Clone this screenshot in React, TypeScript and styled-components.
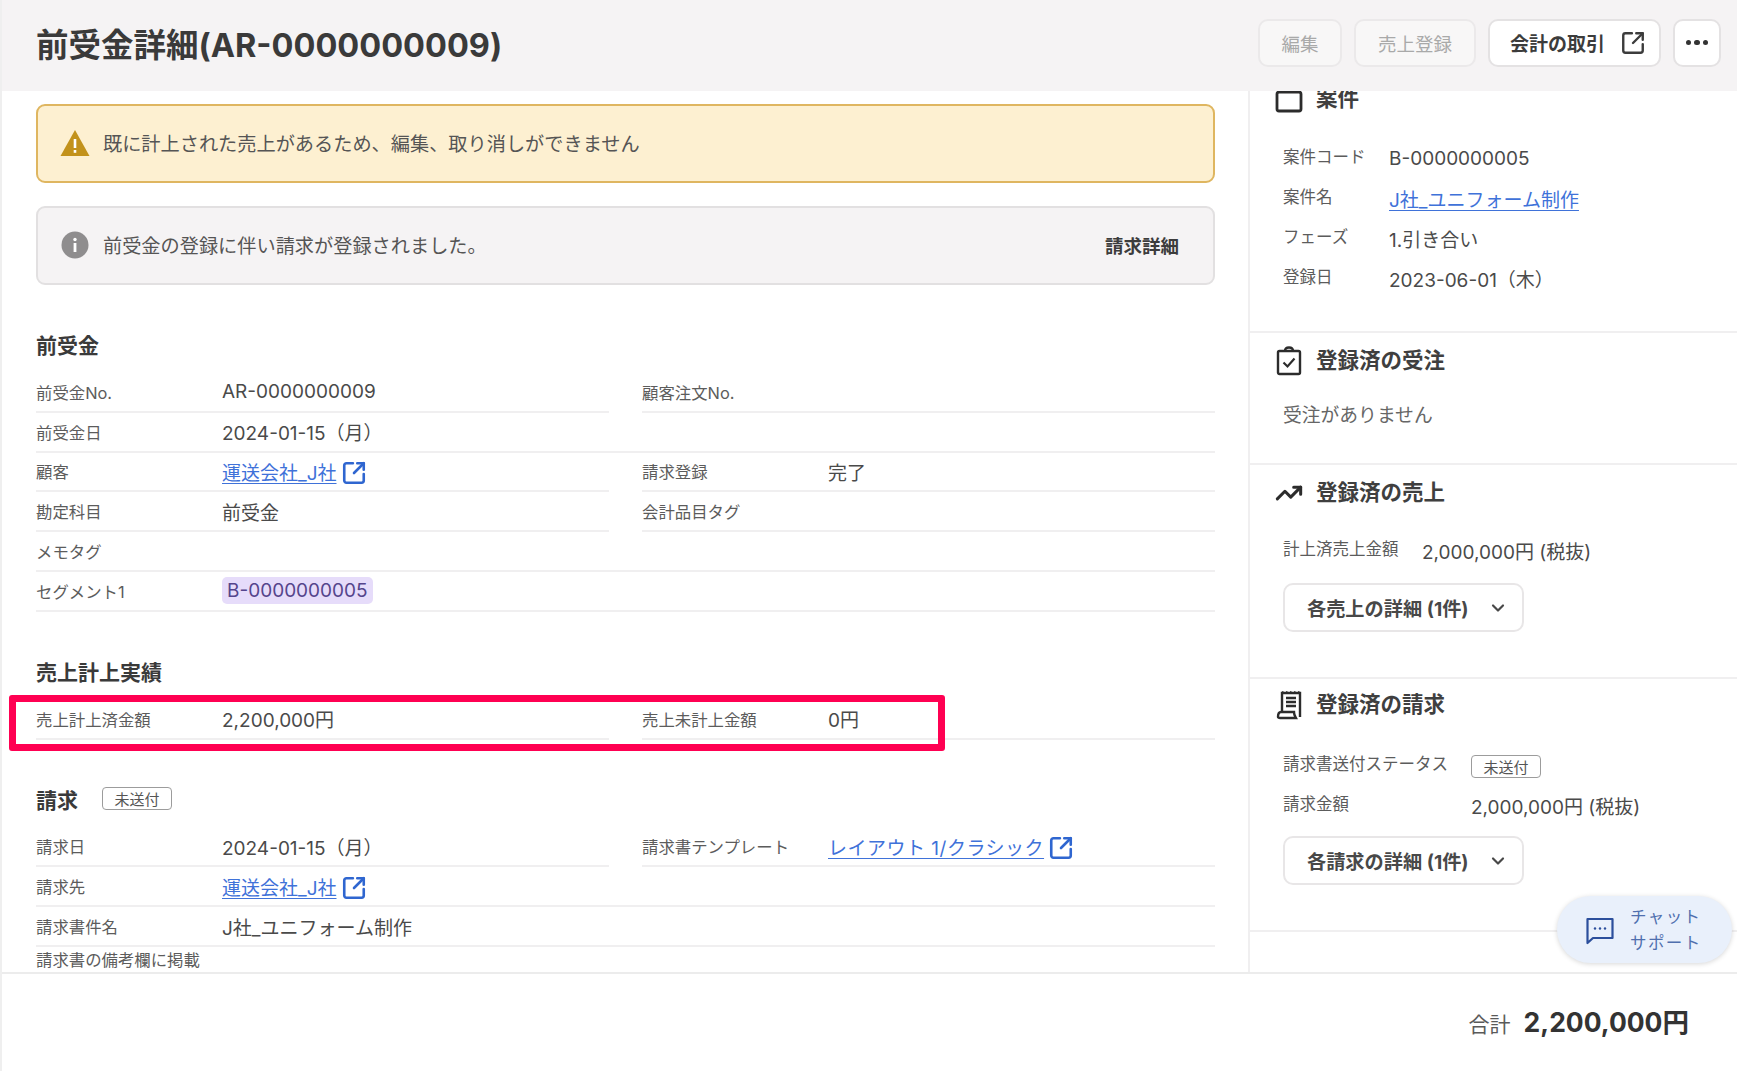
import React from 'react';
import styled, { createGlobalStyle } from 'styled-components';
import { ChevronDown, SquareArrowOutUpRight, TrendingUp } from 'lucide-react';

const GlobalStyle = createGlobalStyle`
  html, body {
    margin: 0;
    padding: 0;
    background: #fff;
    font-family: Inter, "Noto Sans CJK JP", sans-serif;
    color: #4a4a4a;
  }
  * { box-sizing: border-box; }
`;

const Page = styled.div`
  position: relative;
  width: 1737px;
  height: 1071px;
  overflow: hidden;
  display: flex;
  flex-direction: column;
  border-left: 2px solid #efefef;
`;

const Header = styled.header`
  height: 91px;
  flex: none;
  display: flex;
  align-items: center;
  justify-content: space-between;
  padding: 0 16px 6px 34px;
  background: #f5f3f4;
  position: relative;
  z-index: 2;
`;

const Title = styled.h1`
  margin: 0;
  font-size: 32.5px;
  font-weight: 700;
  color: #3a3a3a;
`;

const Toolbar = styled.div`
  display: flex;
  gap: 12px;
`;

const ToolButton = styled.button<{ $disabled?: boolean; $width: number; $inset?: number }>`
  width: ${p => p.$width}px;
  height: 48px;
  padding: 0 0 0 ${p => p.$inset || 0}px;
  display: flex;
  align-items: center;
  justify-content: center;
  gap: 15px;
  font: inherit;
  font-size: ${p => (p.$disabled ? 18.5 : 19)}px;
  font-weight: ${p => (p.$disabled ? 400 : 700)};
  color: ${p => (p.$disabled ? '#a9a9a9' : '#3c3c3c')};
  background: ${p => (p.$disabled ? '#f8f7f7' : '#fff')};
  border: 2px solid ${p => (p.$disabled ? '#ebe9ea' : '#e4e2e3')};
  border-radius: 10px;
`;

const MoreDots = styled.span`
  display: flex;
  gap: 3px;
  & > i {
    width: 5.5px;
    height: 5.5px;
    border-radius: 50%;
    background: #333;
  }
`;

const Body = styled.div`
  flex: 1;
  min-height: 0;
  display: flex;
`;

const Main = styled.main`
  position: relative;
  flex: 1;
  min-width: 0;
  padding: 13px 33px 0 34px;
  overflow: hidden;
`;

const Notice = styled.div<{ $warn?: boolean }>`
  height: 79px;
  margin-bottom: 23px;
  padding: 0 34px 2px 22px;
  display: flex;
  align-items: center;
  gap: 13px;
  font-size: 19.2px;
  color: #555;
  border-radius: 9px;
  background: ${p => (p.$warn ? '#fdf0d1' : '#f5f3f4')};
  border: 2px solid ${p => (p.$warn ? '#dfb660' : '#e2e0e1')};
`;

const NoticeText = styled.span`
  flex: 1;
`;

const NoticeAction = styled.span`
  font-weight: 700;
  font-size: 18.5px;
  color: #3c3c3c;
`;

const Block = styled.section`
  margin-top: 44px;
`;

const BlockTitle = styled.h2`
  margin: 0 0 14px;
  height: 30px;
  display: flex;
  align-items: center;
  gap: 24px;
  font-size: 21px;
  font-weight: 700;
  color: #3a3a3a;
`;

const FieldGrid = styled.div`
  display: grid;
  grid-template-columns: 1fr 1fr;
  column-gap: 33px;
  grid-auto-rows: 39.8px;
`;

const Field = styled.div<{ $wide?: boolean; $open?: boolean }>`
  grid-column: ${p => (p.$wide ? '1 / -1' : 'auto')};
  display: flex;
  align-items: ${p => (p.$open ? 'flex-start' : 'center')};
  border-bottom: 2px solid #f0eff0;
`;

const FieldLabel = styled.span`
  width: 186px;
  flex: none;
  font-size: 16.4px;
  color: #5c5c5c;
`;

const FieldValue = styled.span`
  display: inline-flex;
  align-items: center;
  gap: 4px;
  font-size: 19px;
  color: #4a4a4a;
`;

const TextLink = styled.a`
  color: #3f72d9;
  text-decoration: underline;
  text-underline-offset: 3px;
`;

const WideLink = styled(TextLink)`
  letter-spacing: 0.5px;
`;

const LinkIcon = styled(SquareArrowOutUpRight)`
  color: #2f66d0;
  position: relative;
  top: 2px;
`;

const SegmentTag = styled.span`
  padding: 0 5px;
  height: 27px;
  display: inline-flex;
  align-items: center;
  border-radius: 5px;
  background: #e6dcfa;
  color: #55458c;
`;

const StatusBadge = styled.span`
  display: inline-flex;
  align-items: center;
  justify-content: center;
  width: 70px;
  height: 23px;
  font-size: 15px;
  font-weight: 400;
  color: #555;
  background: #fff;
  border: 1.5px solid #9c9c9c;
  border-radius: 4px;
`;

const Highlight = styled.div`
  position: absolute;
  left: 7px;
  top: 604px;
  width: 936px;
  height: 56px;
  border: 7px solid #ff0052;
  border-radius: 3px;
`;

const Sidebar = styled.aside`
  width: 489px;
  flex: none;
  border-left: 2px solid #f0eff0;
  overflow: hidden;
`;

const SideSection = styled.section<{ $first?: boolean; $top: number; $bottom: number }>`
  margin-top: ${p => (p.$first ? '-18px' : '0')};
  padding: ${p => p.$top}px 0 ${p => p.$bottom}px 25px;
  border-bottom: 2px solid #f0eff0;
`;

const SideTitle = styled.h3<{ $gap: number }>`
  margin: 0 0 ${p => p.$gap}px;
  height: 30px;
  display: flex;
  align-items: center;
  gap: 13px;
  font-size: 21.5px;
  line-height: 1;
  font-weight: 700;
  color: #3f3f3f;
`;

const IconSlot = styled.span`
  width: 28px;
  height: 30px;
  flex: none;
  display: flex;
  align-items: center;
  justify-content: center;
  color: #2c2c2c;
`;

const SideRows = styled.div`
  padding-left: 8px;
`;

const SideRow = styled.div<{ $labelWidth: number }>`
  height: 40px;
  display: flex;
  align-items: center;
  & > span:first-child {
    width: ${p => p.$labelWidth}px;
    flex: none;
    font-size: 16.5px;
    color: #5c5c5c;
    position: relative;
    top: -3px;
  }
`;

const SideValue = styled.span`
  font-size: 19px;
  color: #4a4a4a;
  position: relative;
  top: -1px;
`;

const EmptyText = styled.p`
  margin: 0 0 0 8px;
  font-size: 18.8px;
  line-height: 24px;
  color: #666;
`;

const DetailButton = styled.button<{ $offset: number }>`
  width: 241px;
  height: 49px;
  margin-top: ${p => p.$offset}px;
  padding: 0 14px 0 22px;
  display: flex;
  align-items: center;
  justify-content: space-between;
  font: inherit;
  font-size: 19.2px;
  font-weight: 700;
  color: #484848;
  background: #fff;
  border: 2px solid #e8e6e7;
  border-radius: 10px;
`;

const Footer = styled.footer`
  height: 99px;
  flex: none;
  display: flex;
  align-items: center;
  justify-content: flex-end;
  gap: 13px;
  padding: 0 48px 4px 0;
  border-top: 2px solid #ececec;
  background: #fff;
  position: relative;
`;

const TotalLabel = styled.span`
  font-size: 21px;
  color: #5a5a5a;
  position: relative;
  top: 2px;
`;

const TotalValue = styled.span`
  font-size: 26.5px;
  font-weight: 700;
  color: #333;
`;

const ChatBubble = styled.div`
  position: absolute;
  top: 896px;
  left: 1555px;
  width: 175px;
  height: 67px;
  display: flex;
  align-items: center;
  gap: 15px;
  padding-left: 28px;
  border-radius: 34px;
  background: #e9f0fb;
  box-shadow: 0 1px 5px rgba(0, 0, 0, 0.16);
  z-index: 3;
  color: #2c4f9c;
`;

const ChatText = styled.span`
  font-size: 16.5px;
  line-height: 26px;
  letter-spacing: 1.4px;
  color: #4f6fae;
`;

const ExternalIcon = () => (
  <LinkIcon size={26} strokeWidth={2.6} absoluteStrokeWidth />
);

const WarningIcon = () => (
  <svg width="30" height="28" viewBox="0 0 30 28">
    <path d="M15 1 L29.5 27 H.5 Z" fill="#c2921b" />
    <rect x="13.7" y="10" width="2.6" height="9" fill="#fff" />
    <rect x="13.7" y="21" width="2.6" height="2.8" fill="#fff" />
  </svg>
);

const InfoIcon = () => (
  <svg width="30" height="28" viewBox="0 0 30 28">
    <circle cx="15" cy="14" r="13.5" fill="#8f8d8e" />
    <rect x="13.6" y="12" width="2.8" height="9" fill="#fff" />
    <circle cx="15" cy="8.5" r="1.7" fill="#fff" />
  </svg>
);

const CalendarIcon = () => (
  <svg width="28" height="30" viewBox="0 0 28 30" fill="none" stroke="currentColor" strokeWidth="2.8">
    <rect x="2" y="8" width="24" height="19" rx="2" />
    <path d="M8 3v5M20 3v5" />
  </svg>
);

const ClipboardIcon = () => (
  <svg width="26" height="30" viewBox="0 0 26 30" fill="none" stroke="currentColor" strokeWidth="2.4">
    <rect x="2" y="5" width="22" height="23" rx="1.5" />
    <path d="M9 5c0-2 1.5-3.5 4-3.5S17 3 17 5" />
    <path d="M7.5 16.5l4 4 7-8" strokeWidth="2.2" />
  </svg>
);

const ReceiptIcon = () => (
  <svg width="26" height="30" viewBox="0 0 26 30" fill="none" stroke="currentColor" strokeWidth="2.4">
    <path d="M6 22V3h18v24" />
    <path d="M6 2.5h1.5M10 2.5h1.5M14 2.5h1.5M18 2.5h1.5M22 2.5h1.5" />
    <path d="M10 8h10M10 12h10M10 16h10" />
    <path d="M2 27c0-3 1-5 3-5h13c0 3 1 4 2 6H4c-1 0-2-.4-2-1z" />
  </svg>
);

const ChatIcon = () => (
  <svg width="30" height="30" viewBox="0 0 30 30" fill="none" stroke="currentColor" strokeWidth="2.2">
    <path d="M2.5 4h25v19H8l-5.5 5z" strokeLinejoin="round" />
    <circle cx="10" cy="13.5" r="1.2" fill="currentColor" stroke="none" />
    <circle cx="15" cy="13.5" r="1.2" fill="currentColor" stroke="none" />
    <circle cx="20" cy="13.5" r="1.2" fill="currentColor" stroke="none" />
  </svg>
);

const App = () => {
  return <Page>
    <GlobalStyle />
    <Header>
      <Title>前受金詳細(AR-0000000009)</Title>
      <Toolbar>
        <ToolButton $disabled $width={84}>編集</ToolButton>
        <ToolButton $disabled $width={122}>売上登録</ToolButton>
        <ToolButton $width={173} $inset={7}>
          会計の取引
          <SquareArrowOutUpRight size={26} strokeWidth={2.4} absoluteStrokeWidth />
        </ToolButton>
        <ToolButton $width={48}>
          <MoreDots><i /><i /><i /></MoreDots>
        </ToolButton>
      </Toolbar>
    </Header>

    <Body>
      <Main>
        <Notice $warn>
          <WarningIcon />
          <NoticeText>既に計上された売上があるため、編集、取り消しができません</NoticeText>
        </Notice>
        <Notice>
          <InfoIcon />
          <NoticeText>前受金の登録に伴い請求が登録されました。</NoticeText>
          <NoticeAction>請求詳細</NoticeAction>
        </Notice>

        <Block>
          <BlockTitle>前受金</BlockTitle>
          <FieldGrid>
            <Field>
              <FieldLabel>前受金No.</FieldLabel>
              <FieldValue>AR-0000000009</FieldValue>
            </Field>
            <Field>
              <FieldLabel>顧客注文No.</FieldLabel>
            </Field>
            <Field $wide>
              <FieldLabel>前受金日</FieldLabel>
              <FieldValue>2024-01-15（月）</FieldValue>
            </Field>
            <Field>
              <FieldLabel>顧客</FieldLabel>
              <FieldValue>
                <TextLink>運送会社_J社</TextLink>
                <ExternalIcon />
              </FieldValue>
            </Field>
            <Field>
              <FieldLabel>請求登録</FieldLabel>
              <FieldValue>完了</FieldValue>
            </Field>
            <Field>
              <FieldLabel>勘定科目</FieldLabel>
              <FieldValue>前受金</FieldValue>
            </Field>
            <Field>
              <FieldLabel>会計品目タグ</FieldLabel>
            </Field>
            <Field $wide>
              <FieldLabel>メモタグ</FieldLabel>
            </Field>
            <Field $wide>
              <FieldLabel>セグメント1</FieldLabel>
              <FieldValue><SegmentTag>B-0000000005</SegmentTag></FieldValue>
            </Field>
          </FieldGrid>
        </Block>

        <Block>
          <BlockTitle>売上計上実績</BlockTitle>
          <FieldGrid>
            <Field>
              <FieldLabel>売上計上済金額</FieldLabel>
              <FieldValue>2,200,000円</FieldValue>
            </Field>
            <Field>
              <FieldLabel>売上未計上金額</FieldLabel>
              <FieldValue>0円</FieldValue>
            </Field>
          </FieldGrid>
        </Block>

        <Block>
          <BlockTitle>
            請求
            <StatusBadge>未送付</StatusBadge>
          </BlockTitle>
          <FieldGrid>
            <Field>
              <FieldLabel>請求日</FieldLabel>
              <FieldValue>2024-01-15（月）</FieldValue>
            </Field>
            <Field>
              <FieldLabel>請求書テンプレート</FieldLabel>
              <FieldValue>
                <WideLink>レイアウト 1/クラシック</WideLink>
                <ExternalIcon />
              </FieldValue>
            </Field>
            <Field $wide>
              <FieldLabel>請求先</FieldLabel>
              <FieldValue>
                <TextLink>運送会社_J社</TextLink>
                <ExternalIcon />
              </FieldValue>
            </Field>
            <Field $wide>
              <FieldLabel>請求書件名</FieldLabel>
              <FieldValue>J社_ユニフォーム制作</FieldValue>
            </Field>
            <Field $wide $open>
              <FieldLabel>請求書の備考欄に掲載</FieldLabel>
            </Field>
          </FieldGrid>
        </Block>

        <Highlight />
      </Main>

      <Sidebar>
        <SideSection $first $top={11} $bottom={32}>
          <SideTitle $gap={25}><IconSlot><CalendarIcon /></IconSlot>案件</SideTitle>
          <SideRows>
            <SideRow $labelWidth={106}>
              <span>案件コード</span>
              <SideValue>B-0000000005</SideValue>
            </SideRow>
            <SideRow $labelWidth={106}>
              <span>案件名</span>
              <SideValue><TextLink>J社_ユニフォーム制作</TextLink></SideValue>
            </SideRow>
            <SideRow $labelWidth={106}>
              <span>フェーズ</span>
              <SideValue>1.引き合い</SideValue>
            </SideRow>
            <SideRow $labelWidth={106}>
              <span>登録日</span>
              <SideValue>2023-06-01（木）</SideValue>
            </SideRow>
          </SideRows>
        </SideSection>

        <SideSection $top={13} $bottom={35}>
          <SideTitle $gap={28}><IconSlot><ClipboardIcon /></IconSlot>登録済の受注</SideTitle>
          <EmptyText>受注がありません</EmptyText>
        </SideSection>

        <SideSection $top={13} $bottom={45}>
          <SideTitle $gap={23}><IconSlot><TrendingUp size={30} strokeWidth={2.6} /></IconSlot>登録済の売上</SideTitle>
          <SideRows>
            <SideRow $labelWidth={139}>
              <span>計上済売上金額</span>
              <SideValue>2,000,000円 (税抜)</SideValue>
            </SideRow>
            <DetailButton $offset={12}>
              各売上の詳細 (1件)
              <ChevronDown size={20} strokeWidth={2.6} />
            </DetailButton>
          </SideRows>
        </SideSection>

        <SideSection $top={11} $bottom={45}>
          <SideTitle $gap={26}><IconSlot><ReceiptIcon /></IconSlot>登録済の請求</SideTitle>
          <SideRows>
            <SideRow $labelWidth={188}>
              <span>請求書送付ステータス</span>
              <StatusBadge>未送付</StatusBadge>
            </SideRow>
            <SideRow $labelWidth={188}>
              <span>請求金額</span>
              <SideValue>2,000,000円 (税抜)</SideValue>
            </SideRow>
            <DetailButton $offset={10}>
              各請求の詳細 (1件)
              <ChevronDown size={20} strokeWidth={2.6} />
            </DetailButton>
          </SideRows>
        </SideSection>
      </Sidebar>
    </Body>

    <Footer>
      <TotalLabel>合計</TotalLabel>
      <TotalValue>2,200,000円</TotalValue>
    </Footer>

    <ChatBubble>
      <ChatIcon />
      <ChatText>チャット<br />サポート</ChatText>
    </ChatBubble>
  </Page>;
};

export default App;
